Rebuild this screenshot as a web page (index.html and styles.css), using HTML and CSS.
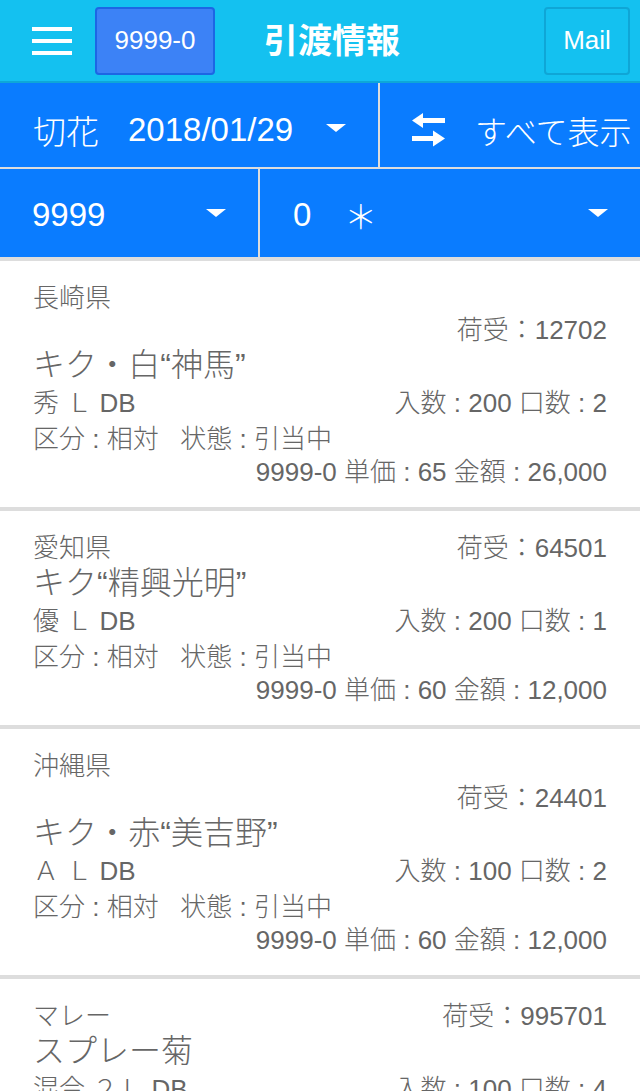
FILE: index.html
```html
<!DOCTYPE html>
<html lang="ja">

<head>
    <meta charset="UTF-8">
    <meta name="viewport" content="width=device-width, initial-scale=1.0">
    <title>引渡情報</title>
    <link rel="stylesheet" href="styles.css">
</head>

<body>

    <!-- ヘッダー -->
    <div class="header">
        <a class="menu" href="javascript:;">
            <span></span>
            <span></span>
            <span></span>
        </a>
        <a class="code-btn" href="javascript:;">9999-0</a>
        <div class="title">引渡情報</div>
        <a class="mail-btn" href="javascript:;">Mail</a>
    </div>

    <!-- 検索条件 -->
    <div class="filter">
        <div class="filter-row row-top">
            <div class="cell cell-date">
                <span>切花</span>
                <span class="date">2018/01/29</span>
                <i class="caret"></i>
            </div>
            <div class="cell cell-all">
                <svg class="swap" width="34" height="34" viewBox="0 0 34 34">
                    <polygon points="0,7.5 11,0 11,15" fill="#fff" />
                    <rect x="10" y="5" width="23" height="5" fill="#fff" />
                    <rect x="0" y="23" width="23" height="5" fill="#fff" />
                    <polygon points="21,17.5 33,25.5 21,33.5" fill="#fff" />
                </svg>
                <span>すべて表示</span>
            </div>
        </div>
        <div class="filter-row row-bottom">
            <div class="cell cell-code">
                <span>9999</span>
                <i class="caret"></i>
            </div>
            <div class="cell cell-sub">
                <span>0</span>
                <span class="star">＊</span>
                <i class="caret"></i>
            </div>
        </div>
    </div>

    <!-- 一覧 -->
    <div class="list">

        <div class="card">
            <div class="line line-region">長崎県</div>
            <div class="line line-region right">荷受：12702</div>
            <div class="line line-name">キク・白“神馬”</div>
            <div class="line line-d1 split"><span>秀 Ｌ DB</span><span>入数 : 200 口数 : 2</span></div>
            <div class="line line-d2">区分 : 相対&nbsp;&nbsp;&nbsp;状態 : 引当中</div>
            <div class="line line-d3 right">9999-0 単価 : 65 金額 : 26,000</div>
        </div>

        <div class="card">
            <div class="line line-region split"><span>愛知県</span><span>荷受：64501</span></div>
            <div class="line line-name">キク“精興光明”</div>
            <div class="line line-d1 split"><span>優 Ｌ DB</span><span>入数 : 200 口数 : 1</span></div>
            <div class="line line-d2">区分 : 相対&nbsp;&nbsp;&nbsp;状態 : 引当中</div>
            <div class="line line-d3 right">9999-0 単価 : 60 金額 : 12,000</div>
        </div>

        <div class="card">
            <div class="line line-region">沖縄県</div>
            <div class="line line-region right">荷受：24401</div>
            <div class="line line-name">キク・赤“美吉野”</div>
            <div class="line line-d1 split"><span>Ａ Ｌ DB</span><span>入数 : 100 口数 : 2</span></div>
            <div class="line line-d2">区分 : 相対&nbsp;&nbsp;&nbsp;状態 : 引当中</div>
            <div class="line line-d3 right">9999-0 単価 : 60 金額 : 12,000</div>
        </div>

        <div class="card">
            <div class="line line-region split"><span>マレー</span><span>荷受：995701</span></div>
            <div class="line line-name">スプレー菊</div>
            <div class="line line-d1 split"><span>混合 ２Ｌ DB</span><span>入数 : 100 口数 : 4</span></div>
            <div class="line line-d2">区分 : 相対&nbsp;&nbsp;&nbsp;状態 : 引当中</div>
            <div class="line line-d3 right">9999-0 単価 : 60 金額 : 12,000</div>
        </div>

    </div>
</body>

</html>
```

FILE: styles.css
```css
* {
    margin: 0;
    padding: 0;
    box-sizing: border-box;
}

body {
    font-family: "Liberation Sans", "Noto Sans CJK JP", sans-serif;
    background-color: #dddddd;
    color: #666666;
}

a {
    text-decoration: none;
    color: #fff;
}

/*
*   ヘッダー
*/
.header {
    height: 83px;
    display: flex;
    align-items: center;
    background-color: #14c1f0;
    border-bottom: 2px solid #0ea7d8;
}

.menu {
    display: flex;
    flex-direction: column;
    gap: 8px;
    width: 40px;
    margin-left: 32px;
}

.menu span {
    display: block;
    height: 4px;
    background-color: #fff;
}

.code-btn {
    width: 120px;
    height: 68px;
    margin-left: 23px;
    display: flex;
    align-items: center;
    justify-content: center;
    background-color: #3c82f6;
    border: 2px solid #1d66e4;
    border-radius: 4px;
    font-size: 26px;
}

.title {
    flex: 1;
    margin-left: 49px;
    padding-bottom: 4px;
    color: #fff;
    font-size: 34px;
    font-weight: bold;
}

.mail-btn {
    width: 86px;
    height: 68px;
    margin-right: 10px;
    display: flex;
    align-items: center;
    justify-content: center;
    border: 2px solid #0fa6d6;
    border-radius: 4px;
    font-size: 26px;
}

/*
*   検索条件
*/
.filter {
    background-color: #0a7cff;
    color: #fff;
    font-size: 33px;
    font-weight: 300;
}

.filter-row {
    display: flex;
}

.row-top {
    height: 86px;
    border-bottom: 2px solid #dddddd;
}

.row-top .cell {
    padding-top: 10px;
}

.row-bottom {
    height: 88px;
}

.row-bottom .cell {
    padding-top: 4px;
}

.cell {
    display: flex;
    align-items: center;
    padding: 0 32px 0 33px;
}

.cell-date {
    width: 380px;
    border-right: 2px solid #dddddd;
}

.cell-date .date {
    margin-left: 29px;
}

.cell-all {
    flex: 1;
    padding-left: 32px;
    padding-right: 0;
    font-size: 32px;
}

.swap {
    margin-right: 29px;
}

.cell-code {
    width: 260px;
    border-right: 2px solid #dddddd;
    padding-left: 32px;
}

.cell-sub {
    flex: 1;
}

.star {
    margin-left: 33px;
}

.caret {
    margin-left: auto;
    margin-top: -4px;
    width: 0;
    height: 0;
    border-left: 10px solid transparent;
    border-right: 10px solid transparent;
    border-top: 8px solid #fff;
}

/*
*   一覧
*/
.list {
    display: flex;
    flex-direction: column;
    gap: 4px;
    padding-top: 4px;
}

.card {
    background-color: #fff;
    padding: 21px 33px 19px;
    font-size: 26px;
    font-weight: 300;
}

.line {
    white-space: nowrap;
}

.line-region {
    line-height: 32px;
}

.line-name {
    font-size: 32px;
    line-height: 38px;
}

.line-d1 {
    line-height: 38px;
}

.line-d2 {
    line-height: 34px;
}

.line-d3 {
    line-height: 32px;
}

.right {
    text-align: right;
}

.split {
    display: flex;
    justify-content: space-between;
}
```
